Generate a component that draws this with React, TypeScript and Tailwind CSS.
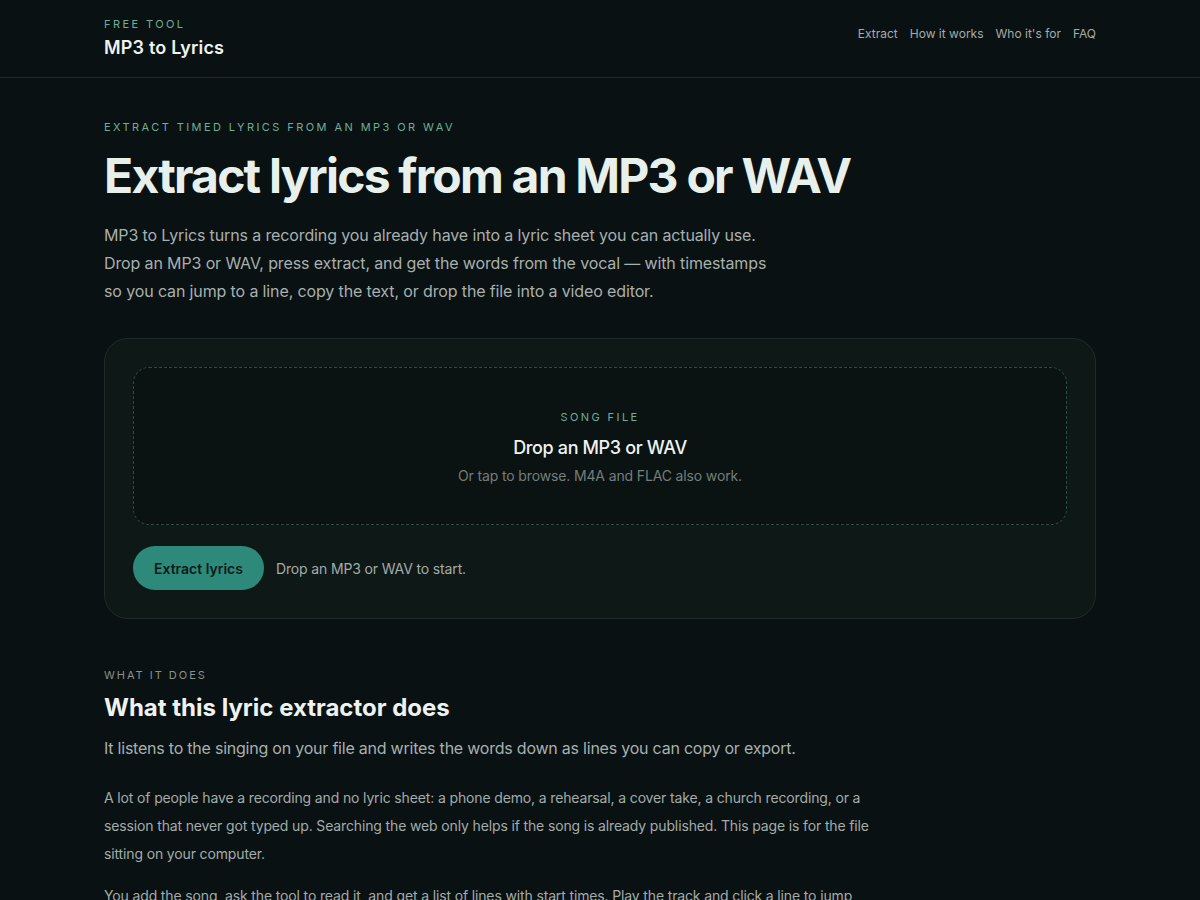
import React from "react";

export default function App() {
  return (
    <div className="min-h-screen bg-[#0a1112] text-[#e8efec]" style={{ fontFamily: "Inter, 'Noto Sans', sans-serif" }}>
      <header className="border-b border-[#222c2c]">
        <div className="mx-auto flex h-[77px] max-w-[992px] items-center justify-between">
          <div className="flex flex-col">
            <span className="text-[11px] uppercase leading-[14px] tracking-[0.22em] text-[#6fae98]">Free tool</span>
            <span className="mt-[5px] text-[18px] font-semibold leading-[24px] tracking-[0.01em] text-[#eef3f1]">MP3 to Lyrics</span>
          </div>
          <nav className="mb-[10px] flex items-center gap-3 text-[12px] text-[#a3acaa]">
            <a>Extract</a>
            <a>How it works</a>
            <a>Who it's for</a>
            <a>FAQ</a>
          </nav>
        </div>
      </header>

      <main className="mx-auto max-w-[992px]">
        <section className="pt-[42px]">
          <p className="text-[11px] uppercase leading-[14px] tracking-[0.22em] text-[#6fae98]">Extract timed lyrics from an MP3 or WAV</p>
          <h1 className="mt-[15px] text-[48px] font-bold leading-[54px] tracking-[-0.037em] text-[#e8f0ec]">Extract lyrics from an MP3 or WAV</h1>
          <p className="mt-[18px] max-w-[700px] text-[16px] leading-[28px] tracking-[-0.008em] text-[#a7b0ae]">
            MP3 to Lyrics turns a recording you already have into a lyric sheet you can actually use.
            <br />
            Drop an MP3 or WAV, press extract, and get the words from the vocal — with timestamps
            <br />
            so you can jump to a line, copy the text, or drop the file into a video editor.
          </p>
        </section>

        <section className="mt-[33px] rounded-[24px] border border-[#1f2b2a] bg-[#0d1817] p-[28px]">
          <div className="flex h-[158px] flex-col items-center justify-center rounded-[16px] border border-dashed border-[#2e4a44] bg-[#0a1212] pt-[4px]">
            <span className="text-[11px] uppercase leading-[14px] tracking-[0.22em] text-[#6fae98]">Song file</span>
            <span className="mt-[12px] text-[18px] font-medium leading-[24px] tracking-[-0.02em] text-[#eef3f1]">Drop an MP3 or WAV</span>
            <span className="mt-[6px] text-[14px] leading-[20px] tracking-[-0.01em] text-[#747e7c]">Or tap to browse. M4A and FLAC also work.</span>
          </div>
          <div className="mt-[21px] flex items-center gap-3">
            <button className="h-[44px] rounded-full bg-[#2d8a7b] px-[21px] text-[14px] font-semibold text-[#0b1a18]">Extract lyrics</button>
            <span className="text-[14px] tracking-[-0.01em] text-[#a3acaa]">Drop an MP3 or WAV to start.</span>
          </div>
        </section>

        <section className="pt-[49px]">
          <p className="text-[11px] uppercase leading-[14px] tracking-[0.18em] text-[#88918f]">What it does</p>
          <h2 className="mt-[10px] text-[24px] font-bold leading-[32px] text-[#eef3f1]">What this lyric extractor does</h2>
          <p className="mt-[10px] text-[16px] leading-[28px] tracking-[-0.014em] text-[#a7b0ae]">It listens to the singing on your file and writes the words down as lines you can copy or export.</p>
          <p className="mt-[22px] max-w-[800px] text-[14px] leading-[28px] tracking-[-0.01em] text-[#a3acaa]">
            A lot of people have a recording and no lyric sheet: a phone demo, a rehearsal, a cover take, a church recording, or a
            <br />
            session that never got typed up. Searching the web only helps if the song is already published. This page is for the file
            <br />
            sitting on your computer.
          </p>
          <p className="mt-[14px] max-w-[800px] text-[14px] leading-[28px] tracking-[-0.01em] text-[#a3acaa]">
            You add the song, ask the tool to read it, and get a list of lines with start times. Play the track and click a line to jump
            <br />
            there, fix anything the tool misheard, and export when it looks right.
          </p>
        </section>
      </main>
    </div>
  );
}
